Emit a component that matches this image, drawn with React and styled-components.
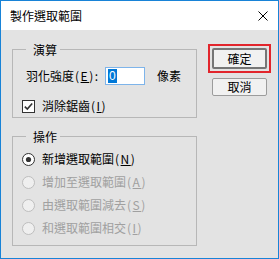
import React from "react";
import styled, { createGlobalStyle } from "styled-components";

const Global = createGlobalStyle`
  html, body { margin: 0; padding: 0; background: #fff; }
  body { font-family: "Noto Sans CJK TC", "Noto Sans", sans-serif; }
`;

const Window = styled.div`
  width: 279px;
  height: 259px;
  box-sizing: border-box;
  border: 1px solid #1883d7;
  display: flex;
  flex-direction: column;
  font-family: "Noto Sans CJK TC", "Noto Sans", sans-serif;
  font-size: 12px;
  color: #000;
`;

const TitleBar = styled.div`
  height: 29px;
  flex: none;
  background: #fff;
  display: flex;
  align-items: center;
  justify-content: space-between;
  padding: 0 10px 0 9px;
`;

const Title = styled.span`
  font-size: 12px;
  line-height: 16px;
`;

const Body = styled.div`
  flex: 1;
  background: #e3e3e3;
  display: flex;
  align-items: flex-start;
  gap: 10px;
  padding: 11px 5px 0 11px;
`;

const LeftCol = styled.div`
  width: 185px;
  display: flex;
  flex-direction: column;
  gap: 10px;
`;

const Group = styled.fieldset`
  margin: 0;
  min-width: 0;
  padding: 0 0 ${(p) => p.$pb}px 9px;
  border: 1px solid #b7b7b7;
`;

const Legend = styled.legend`
  margin-left: 4px;
  padding: 0 3px 0 7px;
  line-height: 17px;
  font-size: 12px;
`;

const Stack = styled.div`
  display: flex;
  flex-direction: column;
  gap: ${(p) => p.$gap}px;
  padding-top: ${(p) => p.$pt}px;
`;

const Row = styled.div`
  height: 18px;
  display: flex;
  align-items: center;
  gap: ${(p) => p.$gap ?? 7}px;
  padding-left: ${(p) => p.$indent ?? 0}px;
  color: ${(p) => (p.$disabled ? "#a0a0a0" : "#000")};
  white-space: nowrap;
  line-height: 16px;
`;

const Label = styled.span`
  width: ${(p) => p.$w}px;
  flex: none;
`;

const Key = styled.span`
  letter-spacing: 1.5px;
  margin-left: 1px;
`;

const U = styled.span`
  text-decoration: underline;
  text-underline-offset: 1px;
`;

const Input = styled.div`
  width: 40px;
  height: 18px;
  box-sizing: border-box;
  border: 1px solid #7eb4ea;
  background: #fff;
  display: flex;
  align-items: center;
  padding-left: 2px;
  margin-right: 5px;
  flex: none;
`;

const Selected = styled.span`
  background: #0078d7;
  color: #fff;
  font-family: "Liberation Sans", sans-serif;
  font-size: 12px;
  line-height: 14px;
  padding: 0 1px;
`;

const Unit = styled.span`
  margin-left: 7px;
`;

const RightCol = styled.div`
  width: 65px;
  display: flex;
  flex-direction: column;
  align-items: center;
  gap: 5px;
  padding-top: 3px;
`;

const Mark = styled.div`
  border: 2px solid #e2252c;
  padding: 2px;
  display: flex;
`;

const Button = styled.button`
  width: 55px;
  height: ${(p) => (p.$default ? 21 : 18)}px;
  box-sizing: border-box;
  margin: 0;
  padding: 0;
  font-family: "Noto Sans CJK TC", sans-serif;
  font-size: 12px;
  line-height: 14px;
  color: #000;
  background: #f1f1f1;
  border: ${(p) => (p.$default ? "2px solid #767676" : "1px solid #9c9c9c")};
  border-radius: 2px;
  display: flex;
  align-items: center;
  justify-content: center;
`;

const CloseIcon = () => (
  <svg width="10" height="10" viewBox="0 0 10 10">
    <path d="M0.5 0.5 L9.5 9.5 M9.5 0.5 L0.5 9.5" stroke="#000" strokeWidth="1" fill="none" />
  </svg>
);

const CheckBox = () => (
  <svg width="13" height="13" viewBox="0 0 13 13" style={{ flex: "none" }}>
    <rect x="0.5" y="0.5" width="12" height="12" fill="#fff" stroke="#333" />
    <path d="M2.8 6.6 L5.3 9.1 L10.2 3.4" stroke="#333" strokeWidth="1.6" fill="none" />
  </svg>
);

const Radio = ({ checked, disabled }) => (
  <svg width="13" height="13" viewBox="0 0 13 13" style={{ flex: "none" }}>
    <circle
      cx="6.5"
      cy="6.5"
      r="6"
      fill={disabled ? "#efefef" : "#fff"}
      stroke={disabled ? "#bdbdbd" : "#333"}
    />
    {checked && <circle cx="6.5" cy="6.5" r="2.6" fill="#333" />}
  </svg>
);

const Mnemonic = ({ k }) => (
  <Key>
    (<U>{k}</U>)
  </Key>
);

const options = [
  { text: "新增選取範圍", key: "N", checked: true },
  { text: "增加至選取範圍", key: "A", disabled: true },
  { text: "由選取範圍減去", key: "S", disabled: true },
  { text: "和選取範圍相交", key: "I", disabled: true },
];

export default function App() {
  return (
    <>
      <Global />
      <Window>
        <TitleBar>
          <Title>製作選取範圍</Title>
          <CloseIcon />
        </TitleBar>
        <Body>
          <LeftCol>
            <Group $pb={2}>
              <Legend>演算</Legend>
              <Stack $pt={9} $gap={12}>
                <Row $indent={4} $gap={0}>
                  <Label $w={79}>
                    羽化強度<Mnemonic k="E" />:
                  </Label>
                  <Input>
                    <Selected>0</Selected>
                  </Input>
                  <Unit>像素</Unit>
                </Row>
                <Row>
                  <CheckBox />
                  <span>
                    消除鋸齒<Mnemonic k="I" />
                  </span>
                </Row>
              </Stack>
            </Group>
            <Group $pb={8}>
              <Legend>操作</Legend>
              <Stack $pt={5} $gap={5}>
                {options.map((o) => (
                  <Row key={o.key} $disabled={o.disabled}>
                    <Radio checked={o.checked} disabled={o.disabled} />
                    <span>
                      {o.text}
                      <Mnemonic k={o.key} />
                    </span>
                  </Row>
                ))}
              </Stack>
            </Group>
          </LeftCol>
          <RightCol>
            <Mark>
              <Button $default>確定</Button>
            </Mark>
            <Button>取消</Button>
          </RightCol>
        </Body>
      </Window>
    </>
  );
}
